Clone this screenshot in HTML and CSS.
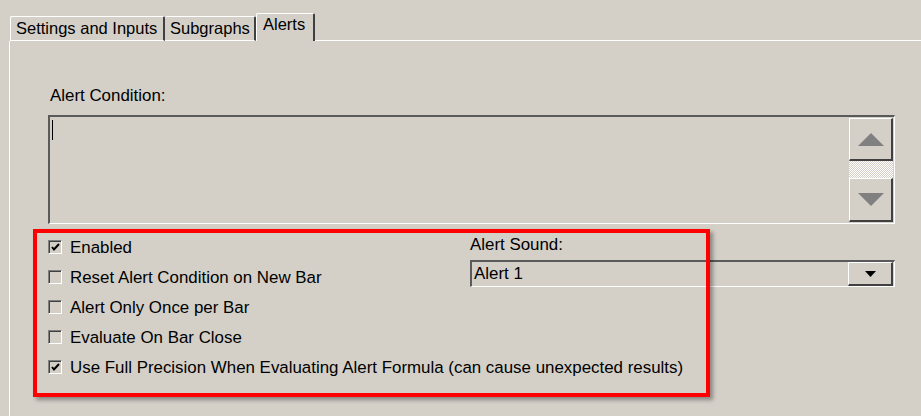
FILE: index.html
```html
<!DOCTYPE html>
<html>
<head>
<meta charset="utf-8">
<link rel="stylesheet" href="styles.css">
</head>
<body>
<div class="window">
  <div class="tabs">
    <div class="tab tab-settings">Settings and Inputs</div>
    <div class="tab tab-subgraphs">Subgraphs</div>
    <div class="tab tab-active">Alerts</div>
    <div class="tab-fill"></div>
  </div>
  <div class="panel">
    <div class="cond-label">Alert Condition:</div>
    <div class="editor">
      <div class="caret"></div>
      <div class="scrollbar">
        <div class="sb-btn"><svg width="26" height="13" viewBox="0 0 26 13"><polygon points="13,0 26,13 0,13" fill="#808080"/></svg></div>
        <div class="sb-track"></div>
        <div class="sb-btn"><svg width="26" height="13" viewBox="0 0 26 13"><polygon points="0,0 26,0 13,13" fill="#808080"/></svg></div>
      </div>
    </div>
    <div class="lower">
      <div class="checks">
        <div class="check-row"><span class="cb"><svg width="9" height="9" viewBox="0 0 9 9"><path d="M1 4 L3 6.5 L8 1" stroke="#000" stroke-width="2" fill="none"/></svg></span>Enabled</div>
        <div class="check-row"><span class="cb"></span>Reset Alert Condition on New Bar</div>
        <div class="check-row"><span class="cb"></span>Alert Only Once per Bar</div>
        <div class="check-row"><span class="cb"></span>Evaluate On Bar Close</div>
        <div class="check-row"><span class="cb"><svg width="9" height="9" viewBox="0 0 9 9"><path d="M1 4 L3 6.5 L8 1" stroke="#000" stroke-width="2" fill="none"/></svg></span>Use Full Precision When Evaluating Alert Formula (can cause unexpected results)</div>
      </div>
      <div class="sound">
        <div class="sound-label">Alert Sound:</div>
        <div class="select">
          <span class="select-text">Alert 1</span>
          <span class="select-btn"><svg width="11" height="6" viewBox="0 0 11 6"><polygon points="0,0 11,0 5.5,6" fill="#000"/></svg></span>
        </div>
      </div>
    </div>
  </div>
  <div class="highlight"></div>
</div>
</body>
</html>
```
FILE: styles.css
```css
html, body {
  margin: 0;
  padding: 0;
  background: #d4d0c8;
}
body {
  font-family: "Liberation Sans", Arial, sans-serif;
  font-size: 16.9px;
  color: #000;
  width: 921px;
  height: 416px;
  overflow: hidden;
}
.window {
  position: relative;
  width: 921px;
  height: 416px;
}
.tabs {
  display: flex;
  align-items: flex-end;
  height: 41px;
  padding-left: 10px;
  box-sizing: border-box;
}
.tab {
  box-sizing: border-box;
  height: 25px;
  font-size: 16.5px;
  border-top: 1px solid #fff;
  border-left: 1px solid #fff;
  border-right: 2px solid #404040;
  border-bottom: 1px solid #fff;
  border-top-left-radius: 2px;
  border-top-right-radius: 2px;
  padding: 2px 0 0 5px;
  line-height: 19px;
  white-space: nowrap;
}
.tab-settings { width: 155px; }
.tab-subgraphs { width: 91px; border-left: none; padding-left: 5px; }
.tab-active {
  width: 59px;
  height: 28px;
  border-bottom: none;
  padding-top: 1px;
  padding-left: 6px;
}
.tab-fill {
  flex: 1;
  border-bottom: 1px solid #fff;
}
.panel {
  margin-left: 9px;
  border-left: 1px solid #fff;
  height: 375px;
  padding-left: 38px;
  padding-top: 45px;
  box-sizing: border-box;
}
.cond-label {
  padding-left: 2px;
  line-height: 19px;
  height: 19px;
}
.editor {
  margin-top: 10px;
  width: 847px;
  height: 109px;
  box-sizing: border-box;
  border-top: 2px solid #5a5a5a;
  border-left: 2px solid #5a5a5a;
  border-right: 1px solid #fff;
  border-bottom: 1px solid #fff;
  display: flex;
  justify-content: space-between;
}
.caret {
  width: 1px;
  height: 20px;
  background: #000;
  margin: 3px 0 0 2px;
}
.scrollbar {
  width: 44px;
  display: flex;
  flex-direction: column;
  margin: 1px 1px 1px 0;
}
.sb-btn {
  height: 43px;
  box-sizing: border-box;
  border-top: 1px solid #fff;
  border-left: 1px solid #fff;
  border-right: 2px solid #404040;
  border-bottom: 2px solid #404040;
  display: flex;
  align-items: center;
  justify-content: center;
}
.sb-btn + .sb-track + .sb-btn { height: 44px; }
.sb-track {
  height: 17px;
  background-color: #e8e6e2;
  background-image: repeating-conic-gradient(#d4d0c8 0 25%, #ffffff 0 50%);
  background-size: 2px 2px;
}
.lower {
  margin-top: 8px;
  display: grid;
  grid-template-columns: 422px 425px;
}
.check-row {
  height: 30px;
  display: flex;
  align-items: center;
  white-space: nowrap;
  line-height: 19px;
}
.cb {
  box-sizing: border-box;
  width: 14px;
  height: 14px;
  margin: 0 8px 0 0;
  border-top: 1px solid #808080;
  border-left: 1px solid #808080;
  border-right: 1px solid #fff;
  border-bottom: 1px solid #fff;
  box-shadow: inset 1px 1px 0 #404040;
  display: flex;
  align-items: center;
  justify-content: center;
  flex: none;
}
.sound {
  padding-top: 3px;
}
.sound-label {
  line-height: 19px;
  height: 19px;
}
.select {
  margin-top: 6px;
  height: 27px;
  box-sizing: border-box;
  border-top: 2px solid #5a5a5a;
  border-left: 2px solid #5a5a5a;
  border-right: 1px solid #fff;
  border-bottom: 1px solid #fff;
  display: flex;
  justify-content: space-between;
  align-items: stretch;
}
.select-text {
  padding-left: 2px;
  line-height: 23px;
}
.select-btn {
  width: 45px;
  box-sizing: border-box;
  border-top: 1px solid #fff;
  border-left: 1px solid #fff;
  border-right: 2px solid #404040;
  border-bottom: 2px solid #404040;
  margin: 0 1px 0 0;
  display: flex;
  align-items: center;
  justify-content: center;
}
.highlight {
  position: absolute;
  left: 33px;
  top: 229px;
  width: 677px;
  height: 168px;
  box-sizing: border-box;
  border: 4px solid #ff0000;
  box-shadow: 3px 3px 4px rgba(0, 0, 0, 0.35);
  pointer-events: none;
}
```
